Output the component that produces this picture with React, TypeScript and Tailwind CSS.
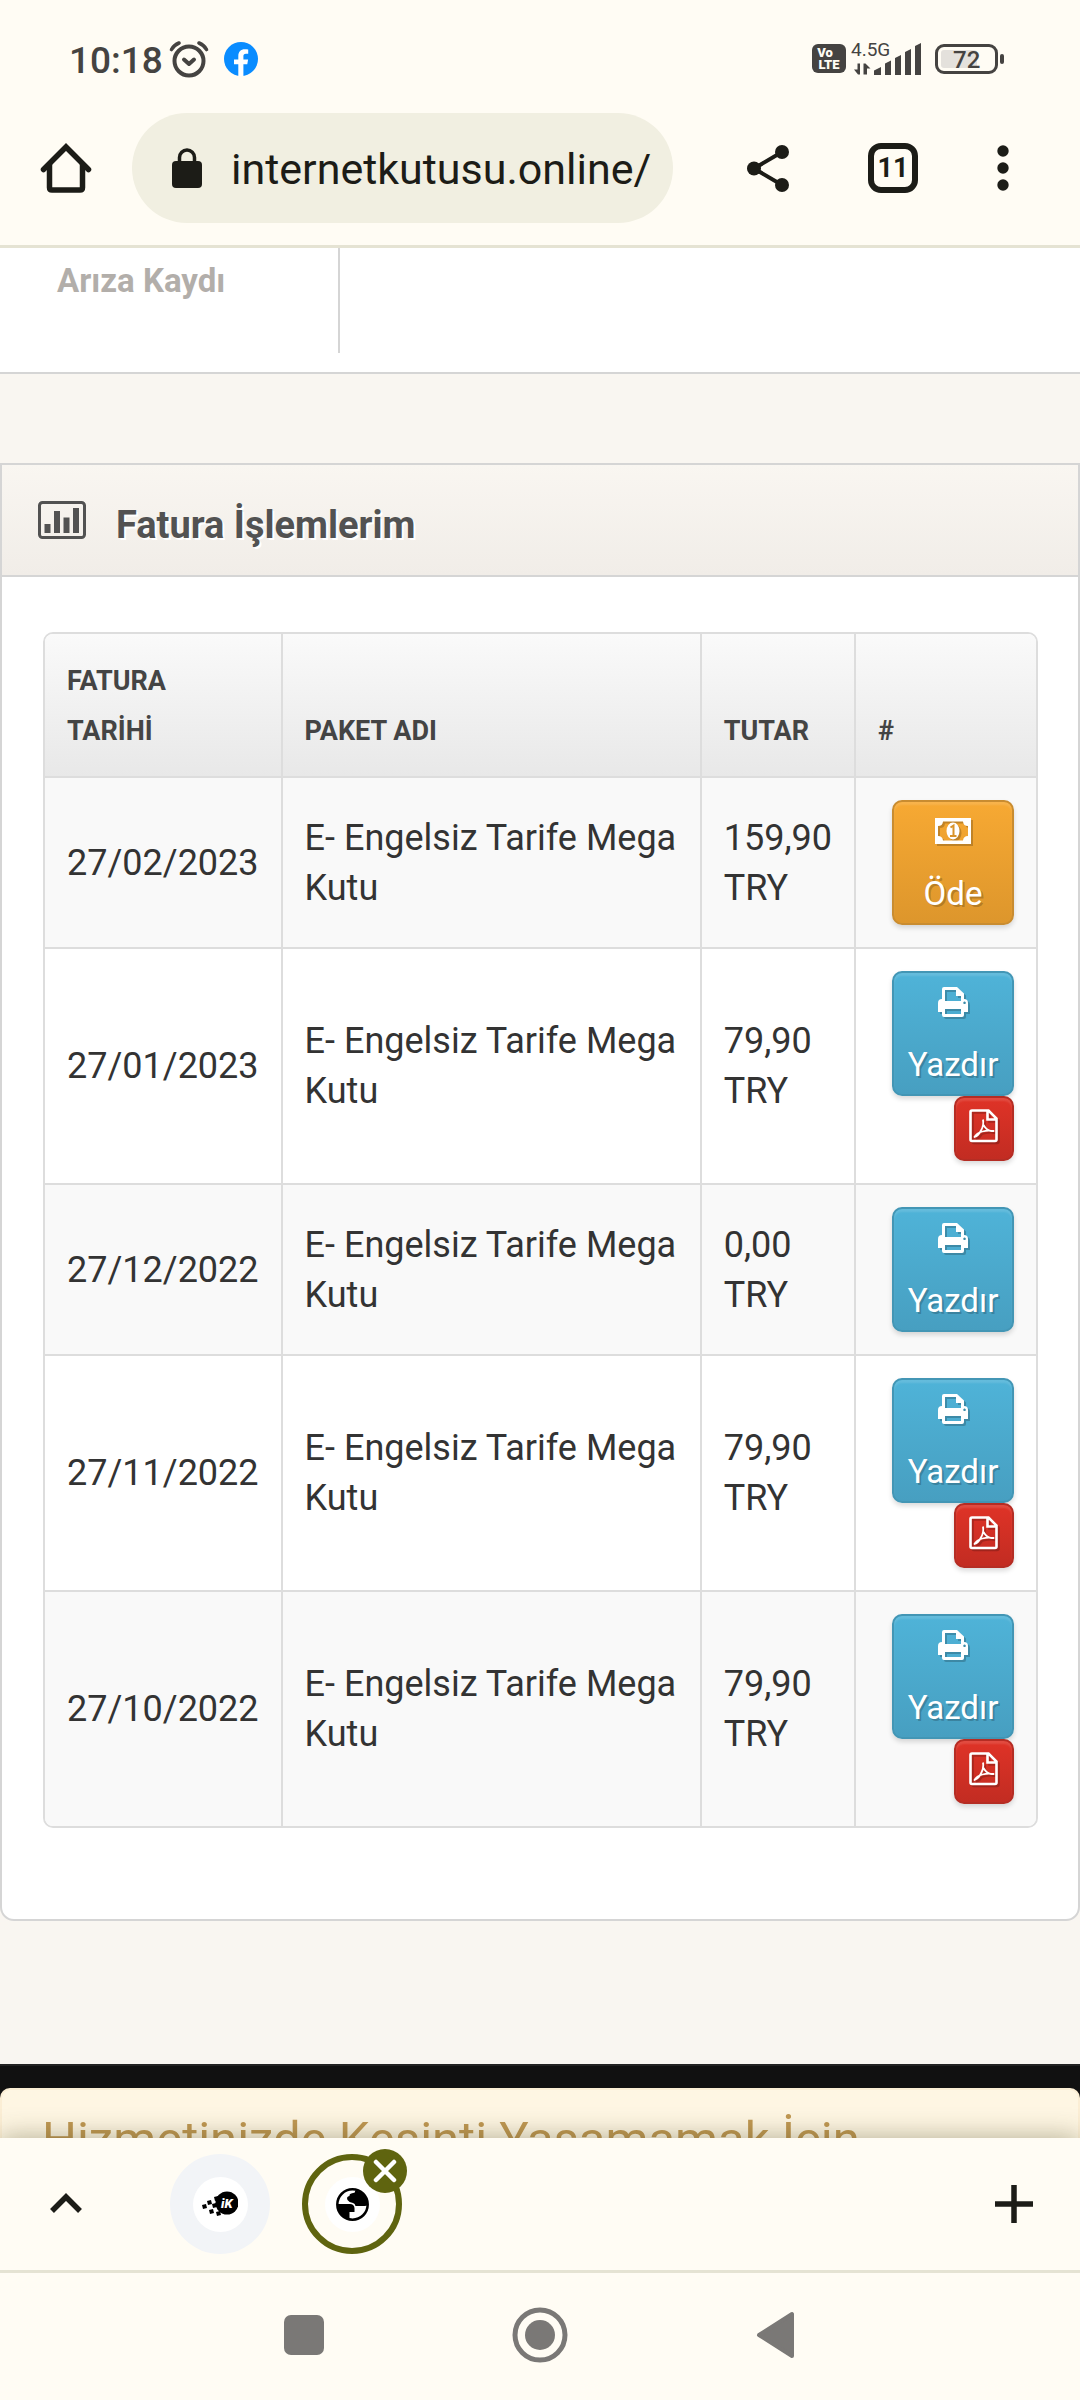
import React from 'react';

type Invoice = {
    date: string;
    plan: string;
    amount: string;
    status: 'unpaid' | 'paid';
    pdf?: boolean;
};

const invoices: Invoice[] = [
    { date: '27/02/2023', plan: 'E- Engelsiz Tarife Mega Kutu', amount: '159,90 TRY', status: 'unpaid' },
    { date: '27/01/2023', plan: 'E- Engelsiz Tarife Mega Kutu', amount: '79,90 TRY', status: 'paid', pdf: true },
    { date: '27/12/2022', plan: 'E- Engelsiz Tarife Mega Kutu', amount: '0,00 TRY', status: 'paid' },
    { date: '27/11/2022', plan: 'E- Engelsiz Tarife Mega Kutu', amount: '79,90 TRY', status: 'paid', pdf: true },
    { date: '27/10/2022', plan: 'E- Engelsiz Tarife Mega Kutu', amount: '79,90 TRY', status: 'paid', pdf: true },
];

function StatusBar() {
    return (
        <div className="flex items-center justify-between pt-9 pr-[76px] pb-8 pl-[69px] text-[#454341]">
            <div className="flex items-center">
                <span className="pt-1 text-[37px] leading-[41px] font-medium">10:18</span>
                <svg className="ml-[6px] h-[38px] w-10" viewBox="0 0 40 38" fill="none" stroke="currentColor" strokeLinecap="round">
                    <circle cx="20" cy="21" r="14.5" strokeWidth="4" />
                    <path d="M2.5 9.5Q5 5 10 3M37.5 9.5Q35 5 30 3" strokeWidth="3.6" />
                    <path d="M15 19.5l5 4.5 5-4.5" strokeWidth="4" strokeLinejoin="round" />
                </svg>
                <svg className="ml-[15px] size-[34px]" viewBox="0 0 34 34">
                    <circle cx="17" cy="17" r="17" fill="#0a8cff" />
                    <path d="M14.3 34V22.3H10v-4.800h4.300v-3.200c0-4.700 2.500-7 6.500-7 1.200 0 2.400.1 3.400.3v4.200h-2.200c-2 0-2.600 1-2.600 2.400v3.300h4.700l-.8 4.800h-3.900V34z" fill="#fff" />
                </svg>
            </div>

            <div className="flex items-center">
                <div className="flex h-[29px] w-[34px] flex-col items-center justify-center rounded-md bg-[#454341] text-[13px] leading-3 font-black text-[#fffcf4]">
                    <span className="pr-2">Vo</span>
                    <span>LTE</span>
                </div>
                <div className="relative ml-[5px] h-[34px] w-[72px]">
                    <span className="absolute top-0 left-0 text-[19px] leading-4">4.5G</span>
                    <svg className="h-[34px] w-[72px]" viewBox="0 0 72 34" fill="currentColor">
                        <path d="M9 21.500v11H7l-4-5h3.500v-6zM12.500 32.500v-11h2l5 5H16v6z" />
                        <path d="M23 33v-4.500l7-3.500v8zM34 33V21.500l6-3V33zM44 33V16l6-3v20zM54 33V10l6-3v26zM64 33V4l6-3v32z" />
                    </svg>
                </div>
                <div className="ml-3 flex items-center gap-[2px]">
                    <div className="flex h-[30px] w-[63px] rounded-[9px] border-[3px] border-[#454341] p-[3px]">
                        <div className="w-9 rounded-[3px] bg-[#e4e1dc] text-center text-[24px] leading-[20px] font-medium">
                            <span className="ml-3">72</span>
                        </div>
                    </div>
                    <div className="h-[10px] w-1 rounded-full bg-[#454341]" />
                </div>
            </div>
        </div>
    );
}

function AddressBar() {
    return (
        <div className="flex items-center border-b-[3px] border-[#e5e3d3] pr-[69px] pb-[22px] pl-10 text-[#1c1c17]">
            <button aria-label="Home">
                <svg className="size-[52px]" viewBox="0 0 52 52" fill="none" stroke="currentColor" strokeWidth="5.5" strokeLinejoin="round">
                    <path d="M9.5 22v23.500q0 2.500 2.500 2.500h28q2.500 0 2.500-2.500V22" />
                    <path d="M3.5 27.500L26 5l22.500 22.500" strokeLinecap="round" strokeLinejoin="miter" />
                </svg>
            </button>
            <div className="ml-10 flex h-[110px] min-w-0 flex-1 items-center rounded-full bg-[#f1efe1] pr-[22px] pl-10">
                <svg className="h-10 w-[30px] shrink-0" viewBox="0 0 30 40" fill="none">
                    <rect y="13" width="30" height="27" rx="4" fill="currentColor" />
                    <path d="M7.5 15V9.500a7.500 7.500 0 0 1 15 0V15" stroke="currentColor" strokeWidth="3.5" />
                </svg>
                <input aria-label="Address" readOnly defaultValue="internetkutusu.online/" className="ml-[29px] h-14 w-full min-w-0 bg-transparent pt-[3px] text-[43px] outline-none" />
            </div>
            <button aria-label="Share" className="ml-[72px]">
                <svg className="h-[50px] w-[46px]" viewBox="0 0 46 50" fill="currentColor">
                    <path d="M37 9L9 25.500 37 42" fill="none" stroke="currentColor" strokeWidth="4" />
                    <circle cx="37" cy="9" r="7" />
                    <circle cx="9" cy="25.5" r="7" />
                    <circle cx="37" cy="42" r="7" />
                </svg>
            </button>
            <button aria-label="Tabs" className="ml-[77px] flex size-[50px] items-center justify-center rounded-[13px] border-[6px] border-current text-[27px] font-bold">
                11
            </button>
            <button aria-label="Menu" className="ml-[77px]">
                <svg className="h-[46px] w-4" viewBox="0 0 16 46" fill="currentColor">
                    <circle cx="8" cy="6" r="5.7" />
                    <circle cx="8" cy="23" r="5.7" />
                    <circle cx="8" cy="40" r="5.7" />
                </svg>
            </button>
        </div>
    );
}

function MoneyIcon() {
    return (
        <svg className="h-[26px] w-9 drop-shadow-[2px_2px_0_rgba(0,0,0,0.2)]" viewBox="0 0 36 26">
            <path fillRule="evenodd" fill="currentColor" d="M0 0h36v26H0zM8 3.500A5 5 0 0 1 3 8v10a5 5 0 0 1 5 4.500h20A5 5 0 0 1 33 18V8a5 5 0 0 1-5-4.500z" />
            <ellipse cx="18" cy="13" rx="6.5" ry="8.5" fill="currentColor" />
            <path d="M15.5 9.500l3-2v10M15 18h6.500" stroke="#d9932b" strokeWidth="2" fill="none" />
        </svg>
    );
}

function PrintIcon() {
    return (
        <svg className="h-[30px] w-8 drop-shadow-[2px_2px_0_rgba(0,0,0,0.2)]" viewBox="0 0 32 30">
            <path fillRule="evenodd" fill="currentColor" d="M5 12V2q0-2 2-2h13l7 6.500V12q4 0 4 4v9h-4v3q0 2-2 2H7q-2 0-2-2v-3H1v-9q0-4 4-4zM8 3v11h16V9h-5V3zM8 22v5h16v-5zM27.500 14.500a1.300 1.300 0 1 0 .1 0z" />
        </svg>
    );
}

function PdfIcon() {
    return (
        <svg className="h-[34px] w-[30px] drop-shadow-[2px_2px_0_rgba(0,0,0,0.2)]" viewBox="0 0 30 34" fill="none" stroke="currentColor">
            <path d="M3 1.500h16.500l8 8v21q0 1.500-1.500 1.500H3q-1.500 0-1.500-1.500V3Q1.500 1.500 3 1.500zM18.500 1.500v9h9" strokeWidth="2.6" />
            <path d="M14 10.500q1 6-2 11-2.500 5-6.500 6.500 2-4 8-5.500 5-1.500 11-.5-6 1-10-6" strokeWidth="1.8" strokeLinejoin="round" />
        </svg>
    );
}

const buttonBase =
    'rounded-[10px] border-2 text-[33px] leading-[50px] text-white [text-shadow:2px_2px_0_rgba(0,0,0,0.2)] shadow-[inset_0_3px_2px_rgba(255,255,255,0.12),0_3px_5px_rgba(0,0,0,0.14)]';

function InvoiceActions({ invoice }: { invoice: Invoice }) {
    return (
        <div className="flex flex-col items-end">
            {invoice.status === 'unpaid' ? (
                <button className={`${buttonBase} flex h-[125px] w-[122px] flex-col items-center justify-between border-[#c98c30] bg-linear-to-b from-[#f7a933] to-[#dd962c] pt-4 pb-1`}>
                    <MoneyIcon />
                    <span>Öde</span>
                </button>
            ) : (
                <button className={`${buttonBase} flex h-[125px] w-[122px] flex-col items-center justify-between border-[#4396b5] bg-linear-to-b from-[#4fb3d8] to-[#479fc1] pt-[14px] pb-1`}>
                    <PrintIcon />
                    <span>Yazdır</span>
                </button>
            )}
            {invoice.pdf && (
                <button aria-label="PDF" className={`${buttonBase} flex h-[65px] w-[60px] justify-center border-[#b52d24] bg-linear-to-b from-[#df3327] to-[#c22c22] pt-[11px]`}>
                    <PdfIcon />
                </button>
            )}
        </div>
    );
}

function InvoiceTable() {
    return (
        <div className="overflow-hidden rounded-[10px] border-2 border-[#dddddd]">
            <table className="w-full border-collapse text-left text-[36px] leading-[50px] text-[#333333]">
                <thead>
                    <tr className="bg-linear-to-b from-[#fafafa] to-[#e8e8e8] align-bottom text-[27px] leading-[50px] text-[#444444]">
                        <th className="w-[235px] border-r-2 border-[#dddddd] px-[22px] pt-[22px] pb-5">
                            FATURA
                            <br />
                            TARİHİ
                        </th>
                        <th className="border-r-2 border-[#dddddd] px-[22px] pt-[22px] pb-5">PAKET ADI</th>
                        <th className="w-[154px] border-r-2 border-[#dddddd] px-[22px] pt-[22px] pb-5">TUTAR</th>
                        <th className="w-[181px] px-[22px] pt-[22px] pb-5">#</th>
                    </tr>
                </thead>
                <tbody>
                    {invoices.map((invoice) => (
                        <tr key={invoice.date} className="border-t-2 border-[#dddddd] odd:bg-[#f9f9f9] even:bg-white">
                            <td className="border-r-2 border-[#dddddd] px-[22px]">{invoice.date}</td>
                            <td className="border-r-2 border-[#dddddd] px-[22px]">{invoice.plan}</td>
                            <td className="border-r-2 border-[#dddddd] px-[22px]">{invoice.amount}</td>
                            <td className="px-[22px] py-[22px]">
                                <InvoiceActions invoice={invoice} />
                            </td>
                        </tr>
                    ))}
                </tbody>
            </table>
        </div>
    );
}

function InvoicePanel() {
    return (
        <section className="mt-[89px] rounded-b-[14px] border-2 border-[#d5d5d5] bg-white">
            <header className="flex h-28 items-center border-b-2 border-[#d5d5d5] bg-linear-to-b from-[#f9f6f1] to-[#f1ede8] pl-9 text-[#525252]">
                <svg className="h-[38px] w-12" viewBox="0 0 48 38" fill="currentColor">
                    <rect x="1.5" y="1.5" width="45" height="35" rx="3" fill="none" stroke="currentColor" strokeWidth="3" />
                    <path d="M6.5 23h6v9h-6zM16 10h6v22h-6zM25.500 16.500h6V32h-6zM35 7h6v25h-6z" />
                </svg>
                <h2 className="ml-[30px] pt-[10px] text-[38px] leading-[50px] font-bold [text-shadow:2px_2px_0_#ffffff]">Fatura İşlemlerim</h2>
            </header>
            <div className="pt-[55px] pr-10 pb-[91px] pl-[41px]">
                <InvoiceTable />
            </div>
        </section>
    );
}

function TabStrip() {
    return (
        <div className="relative flex h-[135px] shrink-0 items-center border-b-[3px] border-[#e5e3d3] bg-[#fffcf4] px-[46px] text-[#1c1c17] shadow-[0_-2px_24px_rgba(60,60,20,0.35)]">
            <button aria-label="Expand">
                <svg className="size-10" viewBox="0 0 40 40" fill="none" stroke="currentColor" strokeWidth="5.5">
                    <path d="M6 27l14-14 14 14" />
                </svg>
            </button>
            <button aria-label="internetkutusu" className="ml-[84px] flex size-[100px] items-center justify-center rounded-full bg-[#f2f4f7]">
                <span className="flex size-[55px] items-center justify-center rounded-full bg-white">
                    <svg className="h-[26px] w-9" viewBox="0 0 36 26">
                        <path d="M0 14l4-1 1 4-4 1zM5 10l4-1 1 4 4-1 1 4-4 1-1-4-4 1zM7 19l4-1 1 4-4 1zM12 6l4-1 1 4-4 1zM14 21l4-1 1 4-4 1zM15 14l4-1 1 5-4 1z" />
                        <circle cx="25" cy="12" r="11.5" />
                        <text x="19" y="17" fontSize="13" fontWeight="900" fontStyle="italic" fontFamily="Roboto" fill="#fff">iK</text>
                    </svg>
                </span>
            </button>
            <div className="relative ml-8">
                <button aria-label="Current tab" className="flex size-[100px] items-center justify-center rounded-full border-[6px] border-[#5f640f]">
                    <span className="flex size-[55px] items-center justify-center rounded-full bg-white">
                        <svg className="size-[33px]" viewBox="0 0 33 33">
                            <circle cx="16.5" cy="16.5" r="15.2" fill="#fff" stroke="#000" strokeWidth="2.5" />
                            <path d="M19 2.500q.5 2.500-2 2.500-4 .5-3.500 3-3.500.5-2 4 1.500 2.500 5.500 3 2 .5 2.500 3h9q2 0 3.500-1C32 9 27 3 19 2.500zM2 16h12q4 0 4.500 4v4h-5v6.500C6 29 1.500 24 2 16z" />
                        </svg>
                    </span>
                </button>
                <button aria-label="Close tab" className="absolute -top-[5px] -right-[5px] flex size-11 items-center justify-center rounded-full bg-[#5f640f]">
                    <svg className="size-6" viewBox="0 0 24 24" stroke="#fff" strokeWidth="4.5" strokeLinecap="round">
                        <path d="M3 3l18 18M21 3L3 21" />
                    </svg>
                </button>
            </div>
            <button aria-label="New tab" className="ml-auto">
                <svg className="size-10" viewBox="0 0 40 40" stroke="currentColor" strokeWidth="5.5">
                    <path d="M20 1v38M1 20h38" />
                </svg>
            </button>
        </div>
    );
}

function SystemNav() {
    return (
        <nav className="relative flex shrink-0 items-center justify-center gap-[188px] bg-[#fffcf4] pt-[34px] pb-[37px] text-[#7a7876]">
            <button aria-label="Recents">
                <svg className="size-10" viewBox="0 0 40 40">
                    <rect width="40" height="40" rx="7" fill="currentColor" />
                </svg>
            </button>
            <button aria-label="Home screen">
                <svg className="size-14" viewBox="0 0 56 56" fill="currentColor">
                    <circle cx="28" cy="28" r="25" fill="none" stroke="currentColor" strokeWidth="5" />
                    <circle cx="28" cy="28" r="15" />
                </svg>
            </button>
            <button aria-label="Back">
                <svg className="h-12 w-10" viewBox="0 0 40 48" fill="currentColor" stroke="currentColor" strokeWidth="4" strokeLinejoin="round">
                    <path d="M36 3v42L3 24z" />
                </svg>
            </button>
        </nav>
    );
}

export default function App() {
    return (
        <div className="flex h-screen flex-col overflow-hidden bg-[#f9f6f1] font-[Roboto,sans-serif]">
            <div className="shrink-0 bg-[#fffcf4]">
                <StatusBar />
                <AddressBar />
            </div>

            <main className="flex min-h-0 flex-1 flex-col overflow-hidden">
                <div className="flex border-b-2 border-[#d5d5d5] bg-white pb-[19px]">
                    <a href="#ariza" className="h-[105px] w-[340px] border-r-2 border-[#d5d5d5] pt-2 pl-[57px] text-[33px] leading-[50px] font-bold text-[#b2aeaa]">
                        Arıza Kaydı
                    </a>
                </div>

                <InvoicePanel />

                {/* footer, partly under the tab strip */}
                <footer className="mt-[143px] border-t-2 border-[#222222] bg-[#111111] pt-[22px]">
                    <div className="rounded-[10px] border-2 border-[#fbeed5] bg-[#fef6e3] px-10 pt-[18px] pb-10 text-[49px] leading-[64px] text-[#c09853]">
                        Hizmetinizde Kesinti Yaşamamak İçin
                    </div>
                </footer>
            </main>

            <TabStrip />
            <SystemNav />
        </div>
    );
}
